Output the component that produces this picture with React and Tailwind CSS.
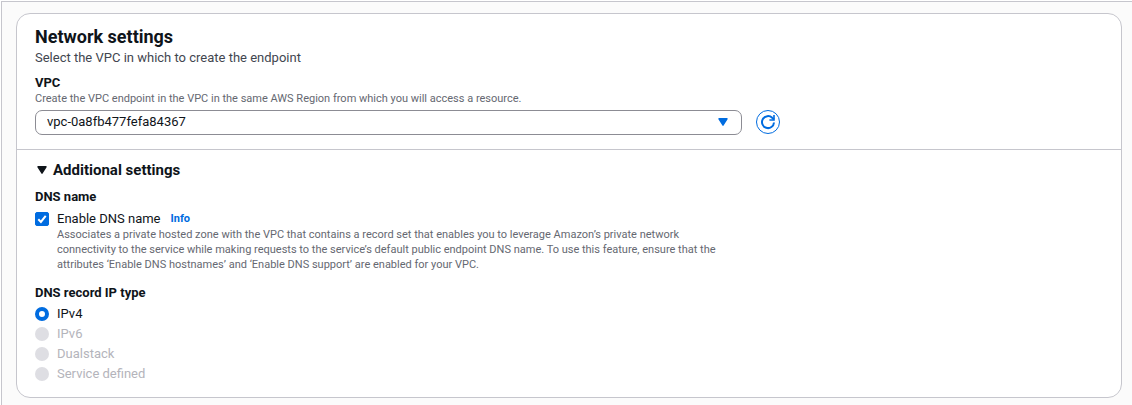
import React, { useState } from "react";

const ipTypes = [
  { value: "ipv4", label: "IPv4" },
  { value: "ipv6", label: "IPv6", disabled: true },
  { value: "dualstack", label: "Dualstack", disabled: true },
  { value: "service-defined", label: "Service defined", disabled: true },
];

function Caret({ className }) {
  return (
    <svg viewBox="0 0 10 8" aria-hidden="true" className={className}>
      <path d="M1 .8h8L5 7.2z" fill="currentColor" stroke="currentColor" strokeWidth="1.4" strokeLinejoin="round" />
    </svg>
  );
}

function RefreshIcon() {
  return (
    <svg viewBox="0 0 16 16" fill="none" stroke="currentColor" strokeWidth="2" aria-hidden="true" className="size-4">
      <path d="M14 8.5a6 6 0 1 1-1.8-4.7L14 5.4" />
      <path d="M14 1v5H9.4" strokeWidth="1.6" />
    </svg>
  );
}

function VpcField() {
  return (
    <div className="mt-1.5">
      <label htmlFor="vpc" className="block text-[13px] leading-5 font-bold">VPC</label>
      <p id="vpc-hint" className="text-[11px] leading-3 text-[#656871]">
        Create the VPC endpoint in the VPC in the same AWS Region from which you will access a resource.
      </p>
      <div className="mt-[5px] flex max-w-[745px] items-start gap-3.5">
        <div className="relative min-w-0 flex-1">
          <select
            id="vpc"
            aria-describedby="vpc-hint"
            className="block h-[25px] w-full appearance-none rounded-[7px] border border-[#8c8c94] bg-white pr-8 pb-0.5 pl-[11px] text-[13px] leading-5"
          >
            <option>vpc-0a8fb477fefa84367</option>
          </select>
          <Caret className="pointer-events-none absolute top-2 right-3.5 h-2 w-2.5 text-[#006ce0]" />
        </div>
        <button
          type="button"
          aria-label="Refresh VPCs"
          className="flex size-6 shrink-0 items-center justify-center rounded-full border border-[#006ce0] text-[#006ce0]"
        >
          <RefreshIcon />
        </button>
      </div>
    </div>
  );
}

function DnsNameField() {
  return (
    <fieldset className="mt-[5px]">
      <legend className="text-[13px] leading-5 font-bold">DNS name</legend>
      <div className="mt-[3px] flex items-start gap-2">
        <span className="relative mt-0.5 block size-3.5 shrink-0">
          <input
            id="enable-dns"
            type="checkbox"
            defaultChecked
            aria-describedby="dns-hint"
            className="peer block size-3.5 appearance-none rounded-[2px] border border-[#8c8c94] checked:border-[#006ce0] checked:bg-[#006ce0]"
          />
          <svg
            viewBox="0 0 14 14"
            fill="none"
            stroke="white"
            strokeWidth="2"
            aria-hidden="true"
            className="pointer-events-none absolute inset-0 hidden size-3.5 peer-checked:block"
          >
            <path d="M3.3 7.3l2.6 2.6 4.8-6" />
          </svg>
        </span>
        <div>
          <div className="flex items-center gap-2.5 pt-px">
            <label htmlFor="enable-dns" className="text-[13px] leading-4">Enable DNS name</label>
            <a href="#info" className="text-[11px] leading-4 font-bold text-[#006ce0]">Info</a>
          </div>
          <p id="dns-hint" className="text-[11px] leading-[15px] text-[#656871]">
            Associates a private hosted zone with the VPC that contains a record set that enables you to leverage Amazon’s private network{" "}
            <br />
            connectivity to the service while making requests to the service’s default public endpoint DNS name. To use this feature, ensure that the{" "}
            <br />
            attributes ‘Enable DNS hostnames’ and ‘Enable DNS support’ are enabled for your VPC.
          </p>
        </div>
      </div>
    </fieldset>
  );
}

function IpTypeField() {
  return (
    <fieldset className="mt-[11px]">
      <legend className="text-[13px] leading-5 font-bold">DNS record IP type</legend>
      <div className="mt-px">
        {ipTypes.map(({ value, label, disabled }) => (
          <label key={value} className="flex h-5 items-center gap-2 text-[13px] has-disabled:text-[#b4b4bb]">
            <input
              type="radio"
              name="ip-type"
              value={value}
              disabled={disabled}
              defaultChecked={value === "ipv4"}
              className="size-3.5 shrink-0 appearance-none rounded-full checked:border-4 checked:border-[#006ce0] disabled:bg-[#dedee3]"
            />
            {label}
          </label>
        ))}
      </div>
    </fieldset>
  );
}

export default function App() {
  const [open, setOpen] = useState(true);
  return (
    <main className="mt-px ml-px min-h-[calc(100vh-1px)] border-t border-l border-[#c6c6cd] bg-[#fbfbfb] pt-[11px] pr-2.5 pb-[7px] pl-3.5 font-['Roboto','Noto_Sans',sans-serif] text-[#0f141a]">
      <section className="rounded-[14px] border border-[#c6c6cd] bg-white">
        <div className="border-b border-[#c6c6cd] px-[18px] pt-[11px] pb-3.5">
          <h2 className="text-lg leading-6 font-bold">Network settings</h2>
          <p className="text-[13px] leading-[18px] text-[#424650]">Select the VPC in which to create the endpoint</p>
          <VpcField />
        </div>
        <div className="px-[18px] pt-2 pb-[13px]">
          <h3>
            <button
              type="button"
              aria-expanded={open}
              onClick={() => setOpen(!open)}
              className="flex items-center gap-1.5 pl-0.5 text-[15px] leading-6 font-bold"
            >
              <Caret className="h-2 w-2.5" />
              Additional settings
            </button>
          </h3>
          {open && (
            <>
              <DnsNameField />
              <IpTypeField />
            </>
          )}
        </div>
      </section>
    </main>
  );
}
